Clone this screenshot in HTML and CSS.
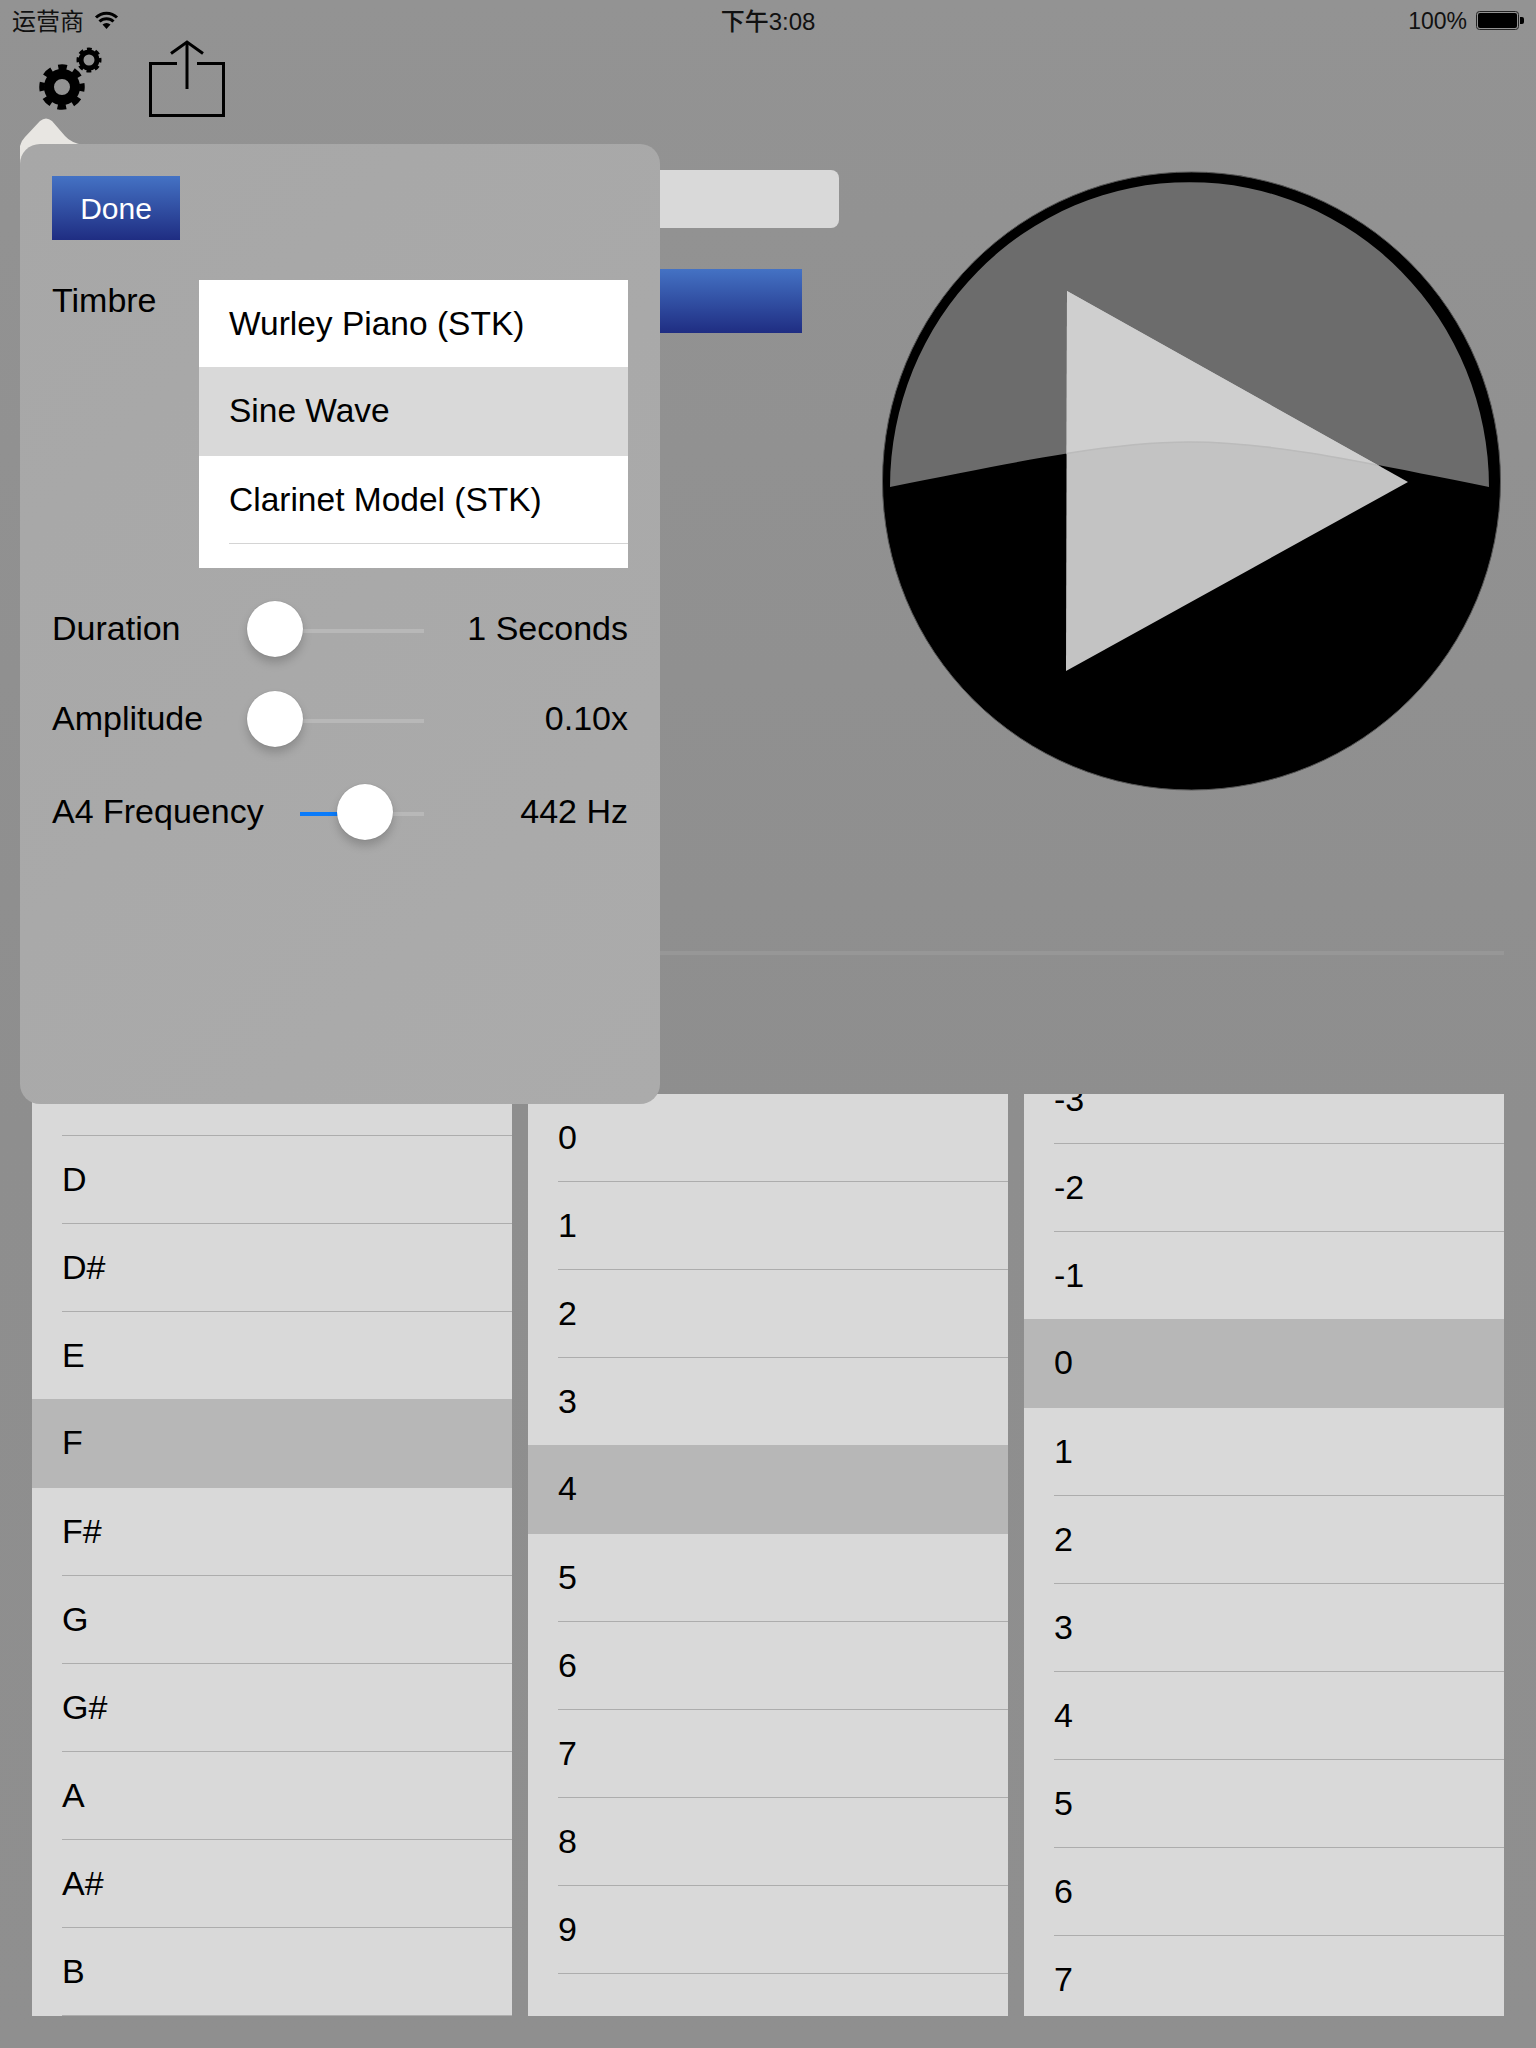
FILE: index.html
```html
<!DOCTYPE html>
<html>
	<head>
		<meta charset="utf-8">
		<title>Tone Generator</title>
		<link rel="stylesheet" href="styles.css">
	</head>
	<body>
		<div class="app">
			<header class="status">
				<div class="status-left">
					<span>运营商</span>
					<svg class="wifi" width="26" height="20" viewBox="93 10 26 20">
						<path d="M96 17.500A15 15 0 0 1 117 17.500" fill="none" stroke="#000" stroke-width="3"/>
						<path d="M99.500 21.500A10 10 0 0 1 113.500 21.500" fill="none" stroke="#000" stroke-width="3"/>
						<path d="M102.500 24.500A6 6 0 0 1 110.500 24.500L106.500 29Z"/>
					</svg>
				</div>
				<div class="status-time">下午3:08</div>
				<div class="status-right">
					<span>100%</span>
					<svg width="48" height="20" viewBox="1476 10 48 20">
						<rect x="1476.500" y="11.500" width="42" height="18" rx="3" fill="none" stroke="#222"/>
						<rect x="1478" y="13" width="39" height="15" rx="2"/>
						<path d="M1520 17h2a2 2 0 0 1 2 2v3a2 2 0 0 1-2 2h-2z"/>
					</svg>
				</div>
			</header>

			<nav class="toolbar">
				<svg width="80" height="80" viewBox="30 40 80 80">
					<circle cx="62" cy="87" r="13" fill="none" stroke="#000" stroke-width="10"/>
					<circle cx="62" cy="87" r="20" fill="none" stroke="#000" stroke-width="5.500" stroke-dasharray="8.700 7" stroke-dashoffset="4.350"/>
					<circle cx="89" cy="60" r="8" fill="none" stroke="#000" stroke-width="5"/>
					<circle cx="89" cy="60" r="10.500" fill="none" stroke="#000" stroke-width="4" stroke-dasharray="4.600 3.650" stroke-dashoffset="2.300"/>
				</svg>
				<svg width="90" height="80" viewBox="140 40 90 80">
					<path d="M177 63.500H150.500V115.500H223.500V63.500H197" fill="none" stroke="#000" stroke-width="3"/>
					<path d="M187 42V89" fill="none" stroke="#000" stroke-width="3"/>
					<path d="M171 53.500L187 42L203 53.500" fill="none" stroke="#000" stroke-width="3"/>
				</svg>
			</nav>

			<section class="stage">
				<div class="stage-left">
					<div class="field"></div>
					<div class="blue-btn under-btn"></div>
				</div>
				<svg class="play" width="640" height="640" viewBox="872 162 640 640">
					<defs>
						<clipPath id="gloss">
							<path d="M890 487A299.500 305 0 0 1 1489 487C1190 427 1190 427 890 487Z"/>
						</clipPath>
						<clipPath id="tri">
							<path d="M1067 291L1408 482L1066 671Z"/>
						</clipPath>
					</defs>
					<circle cx="1191.500" cy="481" r="309" fill="#000" stroke="#555" stroke-width="1"/>
					<path d="M890 487A299.500 305 0 0 1 1489 487C1190 427 1190 427 890 487Z" fill="#6c6c6c"/>
					<path d="M1067 291L1408 482L1066 671Z" fill="#c3c3c3"/>
					<path d="M1067 291L1408 482L1066 671Z" fill="#cfcfcf" clip-path="url(#gloss)"/>
					<path d="M890 487C1190 427 1190 427 1489 487" fill="none" stroke="#bbb" stroke-width="1.500" clip-path="url(#tri)"/>
				</svg>
			</section>
			<div class="rule"></div>

			<section class="tables">
				<div class="list">
					<div class="list-in list-notes">
						<div class="row"></div>
						<div class="row">D</div>
						<div class="row">D#</div>
						<div class="row">E</div>
						<div class="row row-on">F</div>
						<div class="row">F#</div>
						<div class="row">G</div>
						<div class="row">G#</div>
						<div class="row">A</div>
						<div class="row">A#</div>
						<div class="row">B</div>
					</div>
				</div>
				<div class="list">
					<div class="list-in">
						<div class="row">0</div>
						<div class="row">1</div>
						<div class="row">2</div>
						<div class="row">3</div>
						<div class="row row-on">4</div>
						<div class="row">5</div>
						<div class="row">6</div>
						<div class="row">7</div>
						<div class="row">8</div>
						<div class="row">9</div>
					</div>
				</div>
				<div class="list">
					<div class="list-in list-cents">
						<div class="row">-3</div>
						<div class="row">-2</div>
						<div class="row">-1</div>
						<div class="row row-on">0</div>
						<div class="row">1</div>
						<div class="row">2</div>
						<div class="row">3</div>
						<div class="row">4</div>
						<div class="row">5</div>
						<div class="row">6</div>
						<div class="row">7</div>
					</div>
				</div>
			</section>

			<!-- settings popover -->
			<svg class="pop-arrow" width="70" height="50" viewBox="20 116 70 50">
				<path d="M20 166V146Q21 141 25 137L40 121Q46 116 52 121L65 136Q71 143 84 145H90V166Z" fill="#e8e6e2"/>
			</svg>
			<aside class="popover">
				<div class="blue-btn done-btn">Done</div>
				<div class="timbre">
					<div class="timbre-label">Timbre</div>
					<div class="timbre-list">
						<div class="row">Wurley Piano (STK)</div>
						<div class="row row-on row-soft">Sine Wave</div>
						<div class="row">Clarinet Model (STK)</div>
					</div>
				</div>
				<div class="setting">
					<div class="setting-label">Duration</div>
					<div class="slider">
						<div class="thumb" style="left: 0px"></div>
					</div>
					<div class="setting-value">1 Seconds</div>
				</div>
				<div class="setting">
					<div class="setting-label">Amplitude</div>
					<div class="slider">
						<div class="thumb" style="left: 0px"></div>
					</div>
					<div class="setting-value">0.10x</div>
				</div>
				<div class="setting setting-last">
					<div class="setting-label setting-label-wide">A4 Frequency</div>
					<div class="slider slider-short">
						<div class="slider-fill" style="width: 40px"></div>
						<div class="thumb" style="left: 37px"></div>
					</div>
					<div class="setting-value">442 Hz</div>
				</div>
			</aside>
		</div>
	</body>
</html>
```

FILE: styles.css
```css
* {
	margin: 0;
	padding: 0;
	box-sizing: border-box;
}
body {
	font-family: "Liberation Sans", "Noto Sans CJK SC", sans-serif;
	color: #000;
	background: #8f8f8f;
}
.app {
	position: relative;
	width: 1536px;
	height: 2048px;
	overflow: hidden;
	background: linear-gradient(180deg, #939393 0, #8e8e8e 55%, #8f8f8f 100%);
}

/* status bar */
.status {
	display: grid;
	grid-template-columns: 1fr auto 1fr;
	align-items: center;
	height: 40px;
	padding: 0 12px;
	font-size: 24px;
	color: #111;
}
.status-left {
	display: flex;
	align-items: center;
	gap: 9px;
}
.status-left span,
.status-time {
	padding-bottom: 2px;
}
.status-time {
	font-weight: 500;
}
.status-right {
	display: flex;
	align-items: center;
	justify-content: flex-end;
	gap: 9px;
	font-size: 23px;
}
.status-right span {
	padding-top: 2px;
}

/* toolbar */
.toolbar {
	display: flex;
	gap: 30px;
	height: 80px;
	padding-left: 30px;
}

/* main area behind the popover */
.stage {
	display: flex;
	height: 831px;
	padding: 42px 0 0 32px;
}
.stage-left {
	width: 840px;
}
.field {
	margin-top: 8px;
	width: 807px;
	height: 58px;
	background: #d9d9d9;
	border-radius: 8px;
}
.blue-btn {
	background: linear-gradient(180deg, #4472c4 0, #1f2d82 100%);
}
.under-btn {
	margin-top: 41px;
	width: 770px;
	height: 64px;
}
.rule {
	height: 4px;
	margin: 0 32px 139px;
	background: #979797;
}

/* bottom lists */
.tables {
	display: flex;
	gap: 16px;
	padding: 0 32px;
}
.list {
	flex: 1;
	height: 922px;
	overflow: hidden;
	background: #d9d9d9;
}
.list-notes {
	margin-top: -46px;
}
.list-cents {
	margin-top: -38px;
}
.row {
	position: relative;
	height: 88px;
	padding-left: 30px;
	font-size: 34px;
	line-height: 86px;
}
.row::after {
	content: "";
	position: absolute;
	left: 30px;
	right: 0;
	bottom: 0;
	height: 1px;
	background: #adadad;
}
.row-on {
	margin-top: -1px;
	height: 89px;
	background: #b7b7b7;
}
.row-on::after {
	display: none;
}
.row-soft {
	background: #d9d9d9;
}

/* popover */
.pop-arrow {
	position: absolute;
	left: 20px;
	top: 116px;
}
.popover {
	position: absolute;
	left: 20px;
	top: 144px;
	width: 640px;
	height: 960px;
	padding: 32px;
	border-radius: 20px;
	background: linear-gradient(135deg, #a7a7a7 0, #ababab 100%);
	font-size: 34px;
}
.done-btn {
	width: 128px;
	height: 64px;
	color: #fff;
	font-size: 30px;
	line-height: 66px;
	text-align: center;
}
.timbre {
	display: flex;
	margin-top: 40px;
}
.timbre-label {
	width: 147px;
	line-height: 40px;
}
.timbre-list {
	width: 429px;
	height: 288px;
	overflow: hidden;
	background: #fff;
}
.timbre-list .row {
	font-size: 33.5px;
	line-height: 88px;
}
.timbre-list .row::after {
	background: #d4d4d4;
}
.setting {
	display: flex;
	align-items: center;
	height: 56px;
	margin-top: 33px;
}
.setting + .setting {
	margin-top: 34px;
}
.setting + .setting-last {
	margin-top: 37px;
}
.setting-label {
	width: 195px;
	padding-bottom: 2px;
}
.setting-label-wide {
	width: 248px;
}
.slider {
	position: relative;
	width: 177px;
	height: 4px;
	margin-top: 4px;
	background: #b8b8b8;
}
.slider-short {
	width: 124px;
}
.slider-fill {
	position: absolute;
	left: 0;
	top: 0;
	height: 4px;
	background: #0a7bfa;
}
.thumb {
	position: absolute;
	top: -28px;
	width: 56px;
	height: 56px;
	border-radius: 50%;
	background: #fff;
	box-shadow: 0 6px 10px rgba(0, 0, 0, 0.18), 0 0 1px rgba(0, 0, 0, 0.3);
}
.setting-value {
	flex: 1;
	padding-bottom: 2px;
	text-align: right;
}
```
